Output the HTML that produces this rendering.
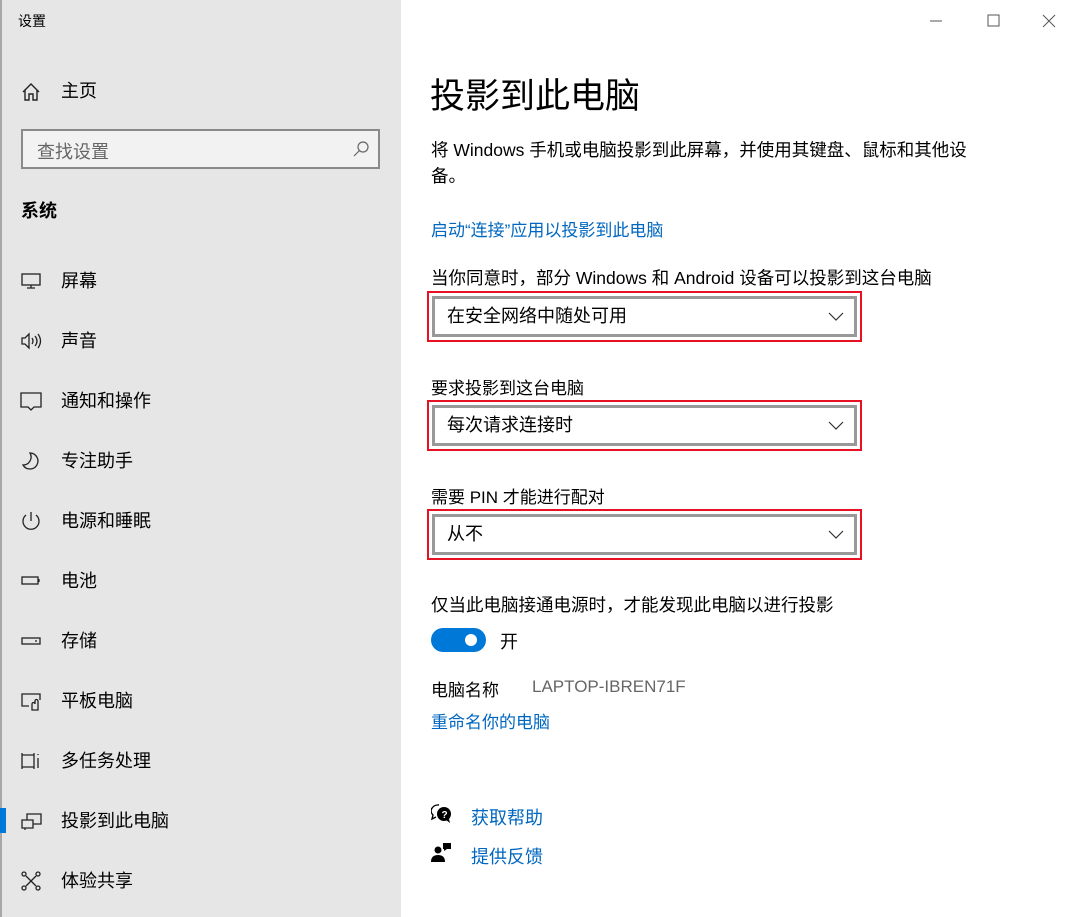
<!DOCTYPE html>
<html><head><meta charset="utf-8"><style>
*{margin:0;padding:0;box-sizing:border-box}
body{width:1078px;height:917px;position:relative;font-family:"Liberation Sans","Noto Sans CJK SC",sans-serif;background:#fff;color:#000;overflow:hidden}
.side{position:absolute;left:0;top:0;width:401px;height:917px;background:#e6e6e6;box-shadow:inset 2px 0 0 #a8a8a8}
.a{position:absolute;white-space:nowrap}
.nav{position:absolute;left:61px;font-size:18px;line-height:24px}
.ic{position:absolute;left:20px;width:22px;height:22px}
.sel{position:absolute;left:427px;width:435px;height:51px;border:2px solid #e81123}
.sel div{position:absolute;left:3px;top:3px;right:3px;bottom:3px;border:3px solid #999;font-size:18px;line-height:35px;padding-left:12px}
.sel svg{position:absolute;right:16px;top:19px}
.lbl{position:absolute;left:431px;font-size:17px}
.blue{color:#0067c0}
</style></head><body>
<div class="side">
<div class="a" style="left:18px;top:11px;font-size:14px">设置</div>
<svg class="ic" style="top:81px" viewBox="0 0 22 22" fill="none" stroke="#222" stroke-width="1.4"><path d="M3 11L11 3l8 8M5 9v10h4v-6h4v6h4V9"/></svg>
<div class="nav" style="top:79px">主页</div>
<div class="a" style="left:21px;top:129px;width:359px;height:40px;border:2px solid #8a8a8a;background:#f2f2f2"></div>
<div class="a" style="left:37px;top:138px;font-size:18px;color:#666">查找设置</div>
<svg class="a" style="left:352px;top:140px" width="18" height="18" viewBox="0 0 18 18" fill="none" stroke="#666" stroke-width="1.2"><circle cx="11" cy="7" r="5"/><path d="M7.5 10.5L2 16"/></svg>
<div class="a" style="left:21px;top:197px;font-size:18px;font-weight:bold">系统</div>
<svg class="ic" style="top:270px" viewBox="0 0 22 22" fill="none" stroke="#222" stroke-width="1.3"><rect x="2" y="4" width="18" height="11"/><path d="M11 15v3M7 18h8"/></svg>
<div class="nav" style="top:269px">屏幕</div>
<svg class="ic" style="top:330px" viewBox="0 0 22 22" fill="none" stroke="#222" stroke-width="1.3"><path d="M2 8h3l4-4v14l-4-4H2z M12 8q2 3 0 6 M15 6q4 5 0 10 M18 4q5 7 0 14"/></svg>
<div class="nav" style="top:329px">声音</div>
<svg class="ic" style="top:390px" viewBox="0 0 22 22" fill="none" stroke="#222" stroke-width="1.3"><path d="M1 3h20v14h-7l-3 3-3-3H1z"/></svg>
<div class="nav" style="top:389px">通知和操作</div>
<svg class="ic" style="top:450px" viewBox="0 0 22 22" fill="none" stroke="#222" stroke-width="1.3"><path d="M10 3a8 8 0 1 1-7 12 8 8 0 0 0 7-12z"/></svg>
<div class="nav" style="top:449px">专注助手</div>
<svg class="ic" style="top:510px" viewBox="0 0 22 22" fill="none" stroke="#222" stroke-width="1.3"><path d="M11 2v9M6 5a8 8 0 1 0 10 0"/></svg>
<div class="nav" style="top:509px">电源和睡眠</div>
<svg class="ic" style="top:570px" viewBox="0 0 22 22" fill="none" stroke="#222" stroke-width="1.3"><rect x="2" y="7" width="16" height="7"/><path d="M19 9v3"/></svg>
<div class="nav" style="top:569px">电池</div>
<svg class="ic" style="top:630px" viewBox="0 0 22 22" fill="none" stroke="#222" stroke-width="1.3"><rect x="2" y="8" width="18" height="6"/><path d="M15 11h2"/></svg>
<div class="nav" style="top:629px">存储</div>
<svg class="ic" style="top:690px" viewBox="0 0 22 22" fill="none" stroke="#222" stroke-width="1.3"><path d="M9 16H2V4h18v6M12 20v-6a1.5 1.5 0 0 1 3 0v-3a1.5 1.5 0 0 1 3 0v9z"/></svg>
<div class="nav" style="top:689px">平板电脑</div>
<svg class="ic" style="top:750px" viewBox="0 0 22 22" fill="none" stroke="#222" stroke-width="1.3"><path d="M2 3v16M14 3v16M2 5h12M2 17h12M18 4v1M18 8v10"/></svg>
<div class="nav" style="top:749px">多任务处理</div>
<div class="a" style="left:0;top:808px;width:6px;height:25px;background:#0078d7"></div>
<svg class="ic" style="top:810px" viewBox="0 0 22 22" fill="none" stroke="#222" stroke-width="1.3"><path d="M7 10V4h14v10h-8M2 10h11v8H2zM5 18v2"/></svg>
<div class="nav" style="top:809px">投影到此电脑</div>
<svg class="ic" style="top:870px" viewBox="0 0 22 22" fill="none" stroke="#222" stroke-width="1.3"><circle cx="4" cy="4" r="2"/><circle cx="18" cy="4" r="2"/><circle cx="4" cy="18" r="2"/><circle cx="18" cy="18" r="2"/><path d="M6 6l10 10M16 6L6 16"/></svg>
<div class="nav" style="top:869px">体验共享</div>
</div>
<svg class="a" style="left:930px;top:14px" width="130" height="14" fill="none" stroke="#555" stroke-width="1"><path d="M0 7h12M58 1h11v11H58zM113 1l12 12M125 1l-12 12"/></svg>
<div class="a" style="left:430px;top:68px;font-size:35px">投影到此电脑</div>
<div class="a" style="left:431px;top:137px;font-size:17.5px;line-height:26px;white-space:normal;width:545px">将 Windows 手机或电脑投影到此屏幕，并使用其键盘、鼠标和其他设备。</div>
<div class="lbl blue" style="top:216px">启动“连接”应用以投影到此电脑</div>
<div class="lbl" style="top:265px;font-size:17.5px">当你同意时，部分 Windows 和 Android 设备可以投影到这台电脑</div>
<div class="sel" style="top:291px"><div>在安全网络中随处可用</div><svg width="16" height="9" fill="none" stroke="#333" stroke-width="1.2"><path d="M1 1l7 7 7-7"/></svg></div>
<div class="lbl" style="top:374px">要求投影到这台电脑</div>
<div class="sel" style="top:400px"><div>每次请求连接时</div><svg width="16" height="9" fill="none" stroke="#333" stroke-width="1.2"><path d="M1 1l7 7 7-7"/></svg></div>
<div class="lbl" style="top:483px">需要 PIN 才能进行配对</div>
<div class="sel" style="top:509px"><div>从不</div><svg width="16" height="9" fill="none" stroke="#333" stroke-width="1.2"><path d="M1 1l7 7 7-7"/></svg></div>
<div class="lbl" style="top:592px;font-size:17.5px">仅当此电脑接通电源时，才能发现此电脑以进行投影</div>
<div class="a" style="left:431px;top:628px;width:55px;height:24px;border-radius:12px;background:#0078d7"></div>
<div class="a" style="left:465px;top:634px;width:12px;height:12px;border-radius:6px;background:#fff"></div>
<div class="a" style="left:500px;top:628px;font-size:18px">开</div>
<div class="lbl" style="top:676px">电脑名称</div>
<div class="lbl" style="left:532px;top:677px;color:#666">LAPTOP-IBREN71F</div>
<div class="lbl blue" style="top:708px">重命名你的电脑</div>
<svg class="a" style="left:431px;top:804px" width="22" height="20" viewBox="0 0 22 20"><path d="M8 1a7 6 0 0 0-6 10l-1 4 4-2" fill="none" stroke="#000" stroke-width="1.4"/><circle cx="13" cy="10" r="7" fill="#000"/><path d="M15 16l4 3-1-4" fill="#000"/><text x="10.5" y="14" font-size="10" fill="#fff" font-family="Liberation Sans" font-weight="bold">?</text></svg>
<div class="lbl blue" style="left:471px;top:804px;font-size:18px">获取帮助</div>
<svg class="a" style="left:431px;top:842px" width="22" height="22" viewBox="0 0 22 22" fill="#000"><circle cx="7" cy="8" r="3.5"/><path d="M0 20q0-7 7-7t7 7z"/><path d="M12 1h8v6h-4l-3 2v-2h-1z"/></svg>
<div class="lbl blue" style="left:471px;top:843px;font-size:18px">提供反馈</div>
</body></html>
